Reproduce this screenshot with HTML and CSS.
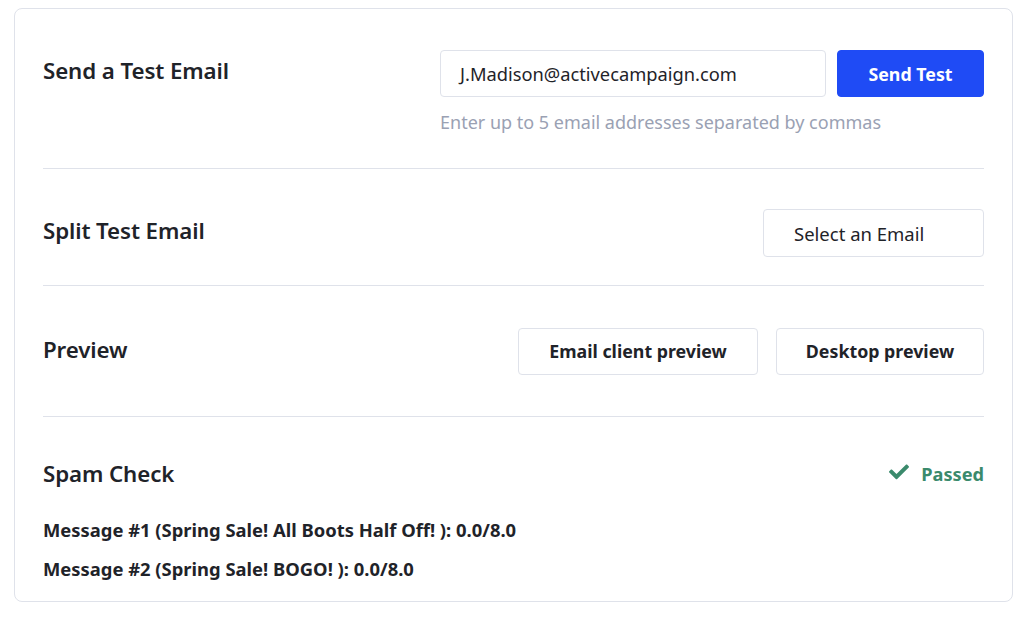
FILE: index.html
```html
<!DOCTYPE html>
<html>
<head>
<meta charset="utf-8">
<link rel="stylesheet" href="styles.css">
</head>
<body>
<div class="card">
  <section class="row row-send">
    <h2 class="title">Send a Test Email</h2>
    <div class="send-controls">
      <div class="send-line">
        <div class="input">J.Madison@activecampaign.com</div>
        <button class="btn btn-primary">Send Test</button>
      </div>
      <div class="hint">Enter up to 5 email addresses separated by commas</div>
    </div>
  </section>
  <section class="row row-split">
    <h2 class="title">Split Test Email</h2>
    <button class="btn btn-select">Select an Email</button>
  </section>
  <section class="row row-preview">
    <h2 class="title">Preview</h2>
    <div class="btn-group">
      <button class="btn btn-outline btn-client">Email client preview</button>
      <button class="btn btn-outline btn-desktop">Desktop preview</button>
    </div>
  </section>
  <section class="row-spam">
    <div class="spam-head">
      <h2 class="title">Spam Check</h2>
      <div class="passed">
        <svg class="check" viewBox="0 0 512 400" width="20" height="16"><path d="M173.9 380.4l-166.4-166.4c-10-10-10-26.2 0-36.2l36.2-36.2c10-10 26.2-10 36.2 0L192 253.7 432.1 13.6c10-10 26.2-10 36.2 0l36.2 36.2c10 10 10 26.2 0 36.2L210.1 380.4c-10 10-26.2 10-36.2 0z" fill="currentColor"/></svg>
        <span>Passed</span>
      </div>
    </div>
    <p class="msg">Message #1 (Spring Sale! All Boots Half Off! ): 0.0/8.0</p>
    <p class="msg">Message #2 (Spring Sale! BOGO! ): 0.0/8.0</p>
  </section>
</div>
</body>
</html>
```
FILE: styles.css
```css
* { box-sizing: border-box; }
html, body { margin: 0; padding: 0; background: #ffffff; }
body {
  font-family: "Noto Sans", "Open Sans", sans-serif;
  color: #1f2329;
  padding: 8px 11px 0 14px;
}
.card {
  width: 999px;
  height: 594px;
  border: 1px solid #dfe2ea;
  border-radius: 8px;
  padding: 0 28px;
}
.row {
  display: flex;
  justify-content: space-between;
  align-items: center;
  border-bottom: 1px solid #dfe2ea;
}
.title {
  margin: 0;
  font-size: 22.3px;
  font-weight: 600;
  color: #1f2329;
  letter-spacing: -0.1px;
}
.row-send {
  align-items: flex-start;
  padding-top: 41px;
  height: 160px;
}
.row-send .title { margin-top: 5px; }
.send-controls { display: flex; flex-direction: column; }
.send-line { display: flex; gap: 11px; }
.input {
  width: 386px;
  height: 47px;
  border: 1px solid #dfe2ea;
  border-radius: 4px;
  padding: 0 19px;
  display: flex;
  align-items: center;
  font-size: 18.3px;
  color: #1f2329;
}
.btn {
  font-family: inherit;
  font-size: 17.8px;
  height: 47px;
  border-radius: 4px;
  background: #fff;
  border: 1px solid #dfe2ea;
  color: #1f2329;
  padding: 0;
  cursor: pointer;
}
.btn-primary {
  width: 147px;
  background: #1f4bf5;
  border-color: #1f4bf5;
  color: #fff;
  font-weight: 700;
}
.hint {
  margin-top: 13px;
  font-size: 18px;
  color: #9aa1b3;
}
.row-split {
  height: 117px;
  padding-top: 12px;
}
.row-split .title { margin-top: -6px; }
.btn-select {
  width: 221px;
  height: 48px;
  font-weight: 400;
  font-size: 18.5px;
  text-align: left;
  padding-left: 30px;
}
.row-preview {
  height: 131px;
  padding-top: 0;
}
.row-preview .title { margin-top: -4px; }
.btn-group { display: flex; gap: 18px; }
.btn-outline { font-weight: 700; }
.btn-client { width: 240px; }
.btn-desktop { width: 208px; }
.row-spam { padding-top: 41px; }
.spam-head {
  display: flex;
  justify-content: space-between;
  align-items: center;
}
.passed {
  display: flex;
  align-items: center;
  gap: 12px;
  color: #3a8a6c;
  font-size: 18.2px;
  font-weight: 700;
}
.check { display: block; margin-top: -4px; }
.msg {
  margin: 0;
  font-size: 18.4px;
  font-weight: 700;
  line-height: 39px;
}
.spam-head + .msg { margin-top: 21px; }
```
